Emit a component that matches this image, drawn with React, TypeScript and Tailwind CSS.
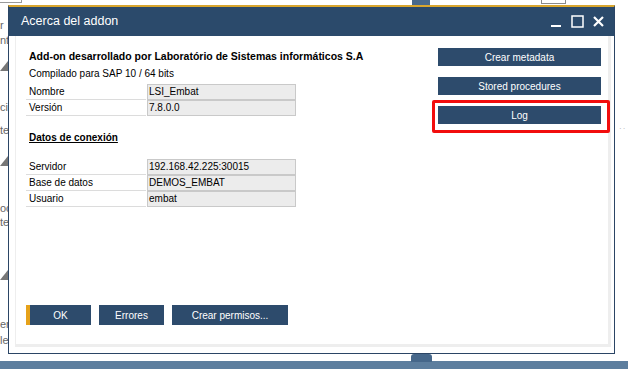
import React from "react";

const FONT = { fontFamily: '"Liberation Sans", Arial, sans-serif' };

function Field({ label, value }: { label: string; value: string }) {
  return (
    <div className="flex h-[16px] items-stretch">
      <div className="w-[120px] border-b border-[#dcdcdc] pl-[3px] leading-[15px]">{label}</div>
      <div className="ml-[1px] w-[149px] border border-[#c9c9c9] bg-[#ececec] pl-[1px] leading-[13px]">
        {value}
      </div>
    </div>
  );
}

function SideButton({ label }: { label: string }) {
  return (
    <div className="flex h-[18px] w-[163px] items-center justify-center bg-[#2d4b6c] text-white">
      {label}
    </div>
  );
}

function FooterButton({ label, width, primary }: { label: string; width: string; primary?: boolean }) {
  return (
    <div
      className={`flex h-[20px] items-center justify-center bg-[#2d4b6c] text-white ${width} ${
        primary ? "border-l-[4px] border-[#e6a21a]" : ""
      }`}
    >
      {label}
    </div>
  );
}

const leftBits: [number, string][] = [
  [19, "r"],
  [34, "nt"],
  [101, "ci"],
  [124, "te"],
  [202, "oc"],
  [216, "te"],
  [318, "er"],
  [334, "le"],
];

export default function App() {
  return (
    <div className="relative h-[369px] w-[628px] overflow-hidden bg-white text-[10px] text-black" style={FONT}>
      {/* background window peeking out behind the dialog */}
      <div className="absolute left-0 top-0 h-[3px] w-[22px] border-b border-r border-[#9a9a9a]" />
      <div className="absolute left-[412px] top-0 h-[5px] w-[18px] bg-[#48698c]" />
      <div className="absolute left-[541px] top-0 h-[4px] w-[25px] border-x border-b border-[#8a8a8a]" />
      {leftBits.map(([top, t]) => (
        <span key={top} className="absolute left-0 text-[11px] leading-[12px] text-[#666]" style={{ top }}>
          {t}
        </span>
      ))}
      <div className="absolute left-0 top-[61px] h-0 w-0 border-b-[10px] border-l-[8px] border-b-[#777] border-l-transparent" />
      <div className="absolute left-0 top-[156px] h-0 w-0 border-b-[10px] border-l-[8px] border-b-[#777] border-l-transparent" />
      <div className="absolute left-0 top-[270px] h-0 w-0 border-b-[10px] border-l-[8px] border-b-[#777] border-l-transparent" />
      <div className="absolute left-0 top-[361px] h-[8px] w-[628px] bg-[#5d7e9e]" />
      <div className="absolute left-[411px] top-[354px] h-[8px] w-[21px] rounded-t-[3px] bg-[#46678a]" />
      <div className="absolute left-[619px] top-[127px] text-[8px] leading-[4px] tracking-[1px] text-[#aaa]">··</div>

      {/* dialog */}
      <div className="relative ml-[8px] mt-[5px] flex h-[349px] w-[607px] flex-col border-x border-b border-t-2 border-x-[#2b4565] border-b-[#2b4565] border-t-[#d9a62e] bg-white">
        <div className="flex h-[29px] shrink-0 items-center justify-between bg-[#2b4a6b] pl-[12px] pr-[10px] text-white">
          <span className="text-[12.5px]">Acerca del addon</span>
          <div className="flex items-center gap-[9px]">
            <svg width="12" height="12" viewBox="0 0 12 12">
              <rect x="1" y="9" width="10" height="2" fill="white" />
            </svg>
            <svg width="13" height="13" viewBox="0 0 13 13">
              <rect x="1" y="1" width="11" height="11" fill="none" stroke="white" strokeWidth="1.5" />
            </svg>
            <svg width="11" height="11" viewBox="0 0 11 11">
              <path d="M1 1 L10 10 M10 1 L1 10" stroke="white" strokeWidth="2.2" />
            </svg>
          </div>
        </div>

        <div className="flex flex-1 pb-[6px] pl-[6px] pr-[3px]">
          <div className="flex flex-1 border-b-[3px] border-l border-r-[3px] border-[#eeeeee] pl-[10px]">
            <div className="flex flex-1 flex-col">
              <div className="mt-[13px] pl-[3px] text-[10.5px] font-bold">
                Add-on desarrollado por Laboratório de Sistemas informáticos S.A
              </div>
              <div className="mt-[1px] pl-[3px]">Compilado para SAP 10 / 64 bits</div>
              <div className="mt-[3px] flex flex-col">
                <Field label="Nombre" value="LSI_Embat" />
                <Field label="Versión" value="7.8.0.0" />
              </div>
              <div className="mt-[14px] pl-[3px] font-bold underline">Datos de conexión</div>
              <div className="mt-[14px] flex flex-col">
                <Field label="Servidor" value="192.168.42.225:30015" />
                <Field label="Base de datos" value="DEMOS_EMBAT" />
                <Field label="Usuario" value="embat" />
              </div>
              <div className="mb-[19px] mt-auto flex gap-[8px]">
                <FooterButton label="OK" width="w-[65px]" primary />
                <FooterButton label="Errores" width="w-[65px]" />
                <FooterButton label="Crear permisos..." width="w-[116px]" />
              </div>
            </div>

            <div className="mt-[12px] flex flex-col items-end">
              <div className="mr-[7px]">
                <SideButton label="Crear metadata" />
              </div>
              <div className="mr-[7px] mt-[11px]">
                <SideButton label="Stored procedures" />
              </div>
              <div className="-mr-[2px] mt-[5px] rounded-[2px] border-[3px] border-[#f20d0d] pb-[6px] pl-[3px] pr-[6px] pt-[3px]">
                <SideButton label="Log" />
              </div>
            </div>
          </div>
        </div>
      </div>
    </div>
  );
}
